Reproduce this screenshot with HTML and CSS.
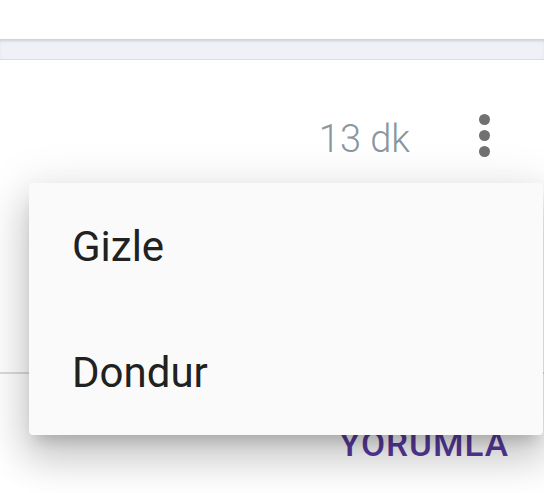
FILE: index.html
```html
<!DOCTYPE html>
<html lang="tr">
<head>
    <meta charset="UTF-8">
    <meta name="viewport" content="width=device-width, initial-scale=1.0">
    <title>Gönderi</title>
    <link rel="stylesheet" href="styles.css">
</head>
<body>

    <div class="topbar"></div>
    <div class="band"></div>

    <div class="card">
        <div class="meta">
            <span class="time">13 dk</span>
            <div class="more">
                <span class="dot"></span>
                <span class="dot"></span>
                <span class="dot"></span>
            </div>
        </div>

        <div class="divider"></div>

        <div class="actions">
            <button class="action">YORUMLA</button>
        </div>
    </div>

    <!-- açılır menü -->
    <div class="menu">
        <div class="menu-item">Gizle</div>
        <div class="menu-item">Dondur</div>
    </div>

</body>
</html>
```

FILE: styles.css
```css
body {
    font-family: Roboto, "Noto Sans", sans-serif;
    background-color: #fff;
    margin: 0;
    padding: 0;
    position: relative;
    overflow: hidden;
    height: 493px;
}

.topbar {
    height: 39px;
    background-color: #fff;
}

.band {
    height: 20px;
    background-color: #f0f0f8;
    box-shadow: inset 0 3px 3px -1px rgba(0, 0, 0, 0.15);
    border-bottom: 1px solid #dcdce3;
}

.card {
    background-color: #fff;
}

.meta {
    display: flex;
    justify-content: flex-end;
    align-items: center;
    padding-top: 56px;
    padding-right: 54px;
}

.time {
    font-size: 38px;
    font-weight: 300;
    line-height: 46px;
    color: #8996a0;
    margin-right: 69px;
}

.more {
    display: flex;
    flex-direction: column;
    gap: 5px;
    align-self: flex-start;
    margin-top: -2px;
}

.dot {
    width: 11px;
    height: 11px;
    border-radius: 50%;
    background-color: #717171;
}

.divider {
    margin-top: 210px;
    height: 2px;
    background-color: #dcdcdc;
}

.actions {
    display: flex;
    justify-content: flex-end;
    padding-top: 54px;
    padding-right: 35px;
}

.action {
    background: none;
    border: none;
    padding: 0;
    font-family: Roboto, sans-serif;
    font-size: 35px;
    font-weight: 500;
    line-height: 34px;
    letter-spacing: 1px;
    color: #583a9e;
}

.menu {
    position: absolute;
    left: 29px;
    top: 183px;
    right: 1px;
    background-color: #fafafa;
    border-radius: 4px;
    box-shadow: 0 24px 38px 3px rgba(0, 0, 0, 0.14),
                0 9px 46px 8px rgba(0, 0, 0, 0.1),
                0 11px 15px -7px rgba(0, 0, 0, 0.2);
}

.menu-item {
    height: 124px;
    padding-top: 2px;
    padding-left: 43px;
    font-size: 42px;
    line-height: 124px;
    color: #212121;
}
```
